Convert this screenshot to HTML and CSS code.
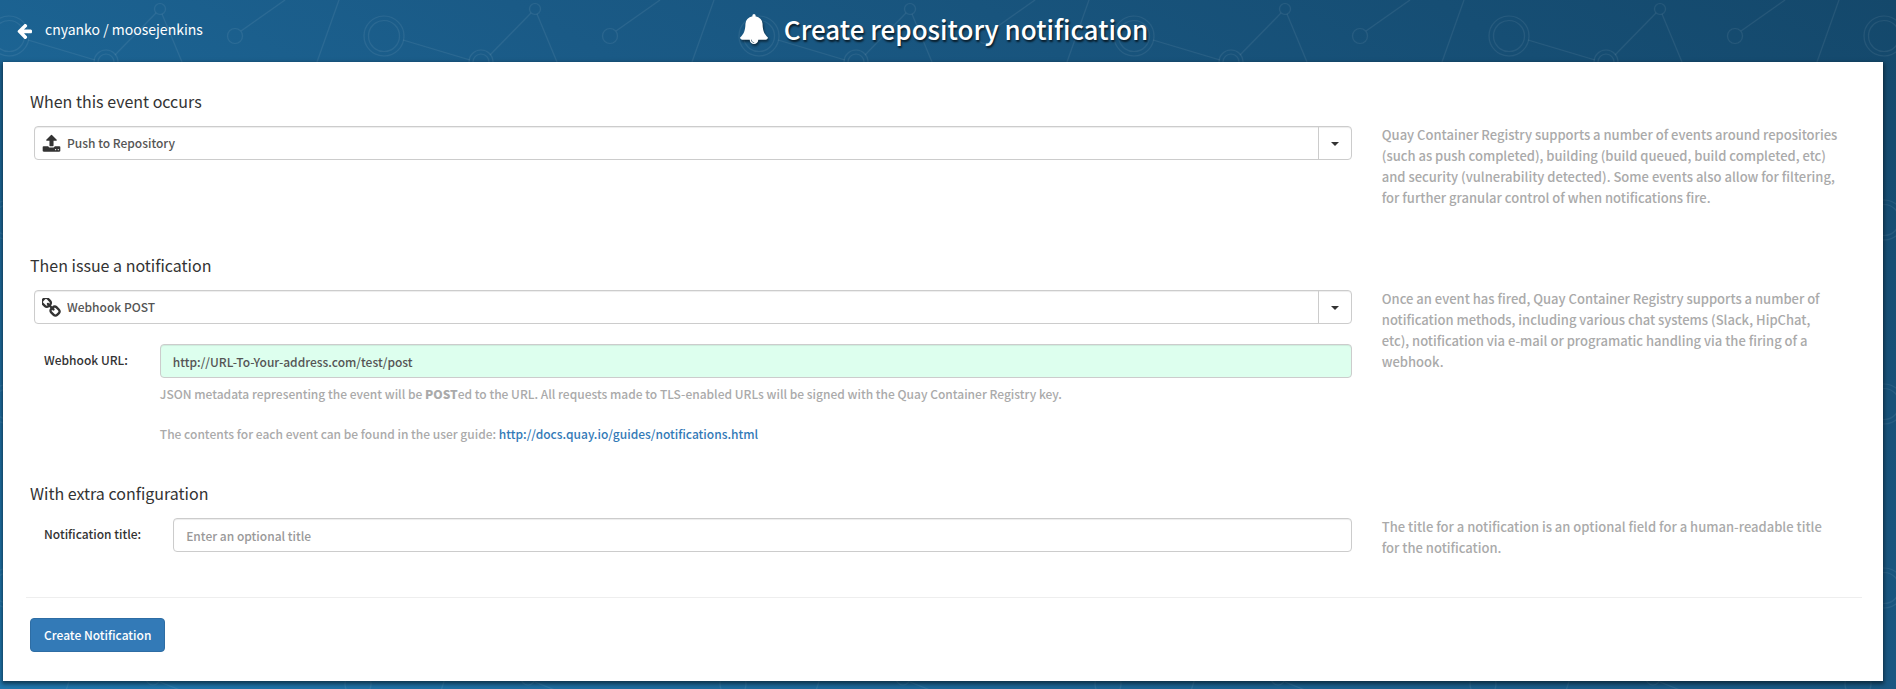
FILE: index.html
```
<!DOCTYPE html>
<html lang="en">
<head>
<meta charset="utf-8">
<title>Create repository notification</title>
<link rel="stylesheet" href="styles.css">
</head>
<body>
<svg class="network" aria-hidden="true">
  <defs>
    <pattern id="net" width="375" height="184" patternUnits="userSpaceOnUse">
      <g fill="none" stroke="#fff" stroke-opacity=".07" stroke-width="1.2">
        <circle cx="9" cy="36" r="20"/><circle cx="9" cy="36" r="15.500"/>
        <circle cx="384" cy="36" r="20"/><circle cx="384" cy="36" r="15.500"/>
        <circle cx="106" cy="62" r="12"/><circle cx="106" cy="62" r="8"/>
        <circle cx="160" cy="9" r="5.500"/><circle cx="235" cy="36" r="7.500"/>
        <path d="M28 40 95 60M115 55 156 13M162 14 182 62M241 31 285 0M339 0 317 62"/>
        <circle cx="153" cy="126" r="7"/><circle cx="358" cy="132" r="13"/>
        <path d="M160 130 180 138M72 120 65 142"/>
      </g>
    </pattern>
  </defs>
  <rect width="100%" height="100%" fill="url(#net)"/>
</svg>
<header class="page-header">
  <a class="back-link" href="#">
    <svg class="arrow-icon" viewBox="0 -40 1536 1500" aria-hidden="true"><path d="M1536 640v128q0 53-32.500 90.500t-84.500 37.500h-704l293 294q38 36 38 90t-38 90l-75 76q-37 37-90 37-52 0-91-37l-651-652q-37-37-37-90 0-52 37-91l651-650q38-38 91-38 52 0 90 38l75 74q38 38 38 91t-38 91l-293 293h704q52 0 84.500 37.500t32.500 90.500z"/></svg>
    <span>cnyanko / moosejenkins</span>
  </a>
  <h1 class="page-title">
    <svg class="bell-icon" viewBox="64 0 1664 1792" aria-hidden="true"><path d="M912 1696q0-16-16-16-59 0-101.500-42.500t-42.500-101.500q0-16-16-16t-16 16q0 73 51.500 124.500t124.500 51.500q16 0 16-16zm816-288q0 52-38 90t-90 38h-448q0 106-75 181t-181 75-181-75-75-181h-448q-52 0-90-38t-38-90q50-42 91-88t85-119.500 74.500-158.500 50-206 19.500-260q0-152 117-282.500t307-158.500q-8-19-8-39 0-40 28-68t68-28 68 28 28 68q0 20-8 39 190 28 307 158.500t117 282.500q0 139 19.500 260t50 206 74.500 158.500 85 119.500 91 88z"/></svg>
    <span>Create repository notification</span>
  </h1>
</header>
<main class="card">
  <form>
    <section class="row">
      <div class="fields">
        <h2 class="section-title" id="event-title">When this event occurs</h2>
        <div class="picker">
          <svg class="picker-icon" viewBox="64 0 1664 1792" aria-hidden="true"><path d="M1344 1472q0-26-19-45t-45-19-45 19-19 45 19 45 45 19 45-19 19-45zm256 0q0-26-19-45t-45-19-45 19-19 45 19 45 45 19 45-19 19-45zm128-224v320q0 40-28 68t-68 28h-1472q-40 0-68-28t-28-68v-320q0-40 28-68t68-28h427q21 56 70.500 92t110.500 36h256q61 0 110.500-36t70.500-92h427q40 0 68 28t28 68zm-325-648q-17 40-59 40h-256v448q0 26-19 45t-45 19h-256q-26 0-45-19t-19-45v-448h-256q-42 0-59-40-17-39 14-69l448-448q18-19 45-19t45 19l448 448q31 30 14 69z"/></svg>
          <input class="picker-input" type="text" value="Push to Repository" aria-labelledby="event-title">
          <button class="picker-toggle" type="button" aria-label="Choose event"><span class="caret"></span></button>
        </div>
      </div>
      <p class="description">Quay Container Registry supports a number of events around repositories (such as push completed), building (build queued, build completed, etc) and security (vulnerability detected). Some events also allow for filtering, for further granular control of when notifications fire.</p>
    </section>
    <section class="row">
      <div class="fields">
        <h2 class="section-title" id="method-title">Then issue a notification</h2>
        <div class="picker">
          <svg class="picker-icon" viewBox="128 128 1536 1536" aria-hidden="true"><path d="M1456 1216q0-40-28-68l-208-208q-28-28-68-28-42 0-72 32 3 3 19 18.500t21.500 21.500 15 19 13 25.500 3.500 27.500q0 40-28 68t-68 28q-15 0-27.500-3.500t-25.500-13-19-15-21.500-21.500-18.500-19q-33 31-33 73 0 40 28 68l206 207q27 27 68 27 40 0 68-26l147-146q28-28 28-67zm-703-705q0-40-28-68l-206-207q-28-28-68-28-39 0-68 27l-147 146q-28 28-28 67 0 40 28 68l208 208q27 27 68 27 42 0 72-31-3-3-19-18.500t-21.500-21.500-15-19-13-25.500-3.500-27.500q0-40 28-68t68-28q15 0 27.500 3.500t25.500 13 19 15 21.500 21.500 18.500 19q33-31 33-73zm895 705q0 120-85 203l-147 146q-83 83-203 83-121 0-204-85l-206-207q-83-83-83-203 0-123 88-209l-88-88q-86 88-208 88-120 0-204-84l-208-208q-84-84-84-204t85-203l147-146q83-83 203-83 121 0 204 85l206 207q83 83 83 203 0 123-88 209l88 88q86-88 208-88 120 0 204 84l208 208q84 84 84 204z"/></svg>
          <input class="picker-input" type="text" value="Webhook POST" aria-labelledby="method-title">
          <button class="picker-toggle" type="button" aria-label="Choose method"><span class="caret"></span></button>
        </div>
        <div class="field">
          <label class="field-label" for="url">Webhook URL:</label>
          <div class="field-body">
            <input class="text-input valid" id="url" type="text" value="http://URL-To-Your-address.com/test/post">
            <p class="help">JSON metadata representing the event will be <strong>POST</strong>ed to the URL. All requests made to TLS-enabled URLs will be signed with the Quay Container Registry key.</p>
            <p class="help">The contents for each event can be found in the user guide: <a class="link" href="http://docs.quay.io/guides/notifications.html">http://docs.quay.io/guides/notifications.html</a></p>
          </div>
        </div>
      </div>
      <p class="description">Once an event has fired, Quay Container Registry supports a number of notification methods, including various chat systems (Slack, HipChat, etc), notification via e-mail or programatic handling via the firing of a webhook.</p>
    </section>
    <section class="row last">
      <div class="fields">
        <h2 class="section-title">With extra configuration</h2>
        <div class="field compact">
          <label class="field-label" for="title">Notification title:</label>
          <div class="field-body"><input class="text-input" id="title" type="text" placeholder="Enter an optional title"></div>
        </div>
      </div>
      <p class="description">The title for a notification is an optional field for a human-readable title for the notification.</p>
    </section>
    <div class="actions"><button class="submit" type="submit">Create Notification</button></div>
  </form>
</main>
</body>
</html>
```
FILE: styles.css
```
* { box-sizing: border-box; }
body {
  margin: 0;
  min-height: 100vh;
  position: relative;
  background: linear-gradient(30deg, #1f75ab 0%, #1a5a86 55%, #14486b 100%);
  color: #333;
  font: 500 12px/20px "Noto Sans CJK SC", "Open Sans", sans-serif;
}
.network { position: absolute; inset: 0; width: 100%; height: 100%; z-index: -1; }
.page-header {
  display: grid;
  grid-template-columns: 1fr auto 1fr;
  height: 62px;
  align-items: center;
  padding: 0 25px 4px 17px;
}
.back-link {
  display: flex;
  align-items: center;
  gap: 13px;
  color: #fff;
  font-size: 14px;
  font-weight: 400;
  text-decoration: none;
}
.arrow-icon { width: 15px; height: 15px; margin-top: 4px; fill: #fff; }
.page-title {
  display: flex;
  align-items: center;
  gap: 16px;
  margin: 0;
  color: #fff;
  font-size: 26px;
  font-weight: 500;
  line-height: 40px;
  text-shadow: 1px 2px 2px rgba(0, 0, 0, .7);
}
.bell-icon { width: 28px; height: 30px; fill: #fff; filter: drop-shadow(1px 2px 1px rgba(0, 0, 0, .5)); }
.card {
  margin: 0 13px 9px 3px;
  padding: 29px 21px 29px 23px;
  background: #fff;
  box-shadow: 0 2px 4px 1px rgba(0, 0, 0, .5);
}
.row {
  display: grid;
  grid-template-columns: minmax(0, 1329fr) minmax(0, 509fr);
  padding: 0 4px 39px;
}
.row.last { padding-bottom: 31px; }
.section-title { margin: 0 0 15px; font-size: 16px; font-weight: 400; line-height: 20px; }
.picker {
  display: flex;
  align-items: center;
  height: 34px;
  margin-left: 4px;
  padding-left: 7px;
  border: 1px solid #ccc;
  border-radius: 4px;
  box-shadow: inset 0 1px 1px rgba(0, 0, 0, .075);
}
.picker-icon { flex: none; width: 19px; height: 19px; fill: #333; }
.picker-input { flex: 1; border: 0; padding: 0 6px; background: none; font: inherit; color: #555; }
.picker-toggle { display: grid; place-items: center; align-self: stretch; width: 33px; padding: 2px 0 0; border: 0; border-left: 1px solid #ccc; background: none; }
.caret { border: 4px solid transparent; border-top-color: #333; border-bottom: 0; }
.description { margin: 33px 0 8px; padding: 0 19px 0 30px; color: #aaa; font-size: 13px; line-height: 21px; }
.field { display: flex; gap: 32px; padding: 20px 0 0 14px; }
.field.compact { padding-top: 0; }
.field-label { padding-top: 6px; }
.field-body { flex: 1; }
.text-input { display: block; width: 100%; height: 34px; padding: 6px 12px; border: 1px solid #ccc; border-radius: 4px; box-shadow: inset 0 1px 1px rgba(0, 0, 0, .075); font: inherit; color: #555; }
.text-input::placeholder { color: #999; opacity: 1; }
.valid { background: #dfe; }
.help { margin: 6px 0 20px; color: #aaa; }
.help:last-child { margin-bottom: 0; }
.help strong { font-weight: 900; }
.link { color: #337ab7; text-decoration: none; }
.actions { border-top: 1px solid #eee; padding: 20px 4px 0; }
.submit { display: block; height: 34px; padding: 0 13px; border: 1px solid #2e6da4; border-radius: 4px; background: #337ab7; color: #fff; font: inherit; }
```
